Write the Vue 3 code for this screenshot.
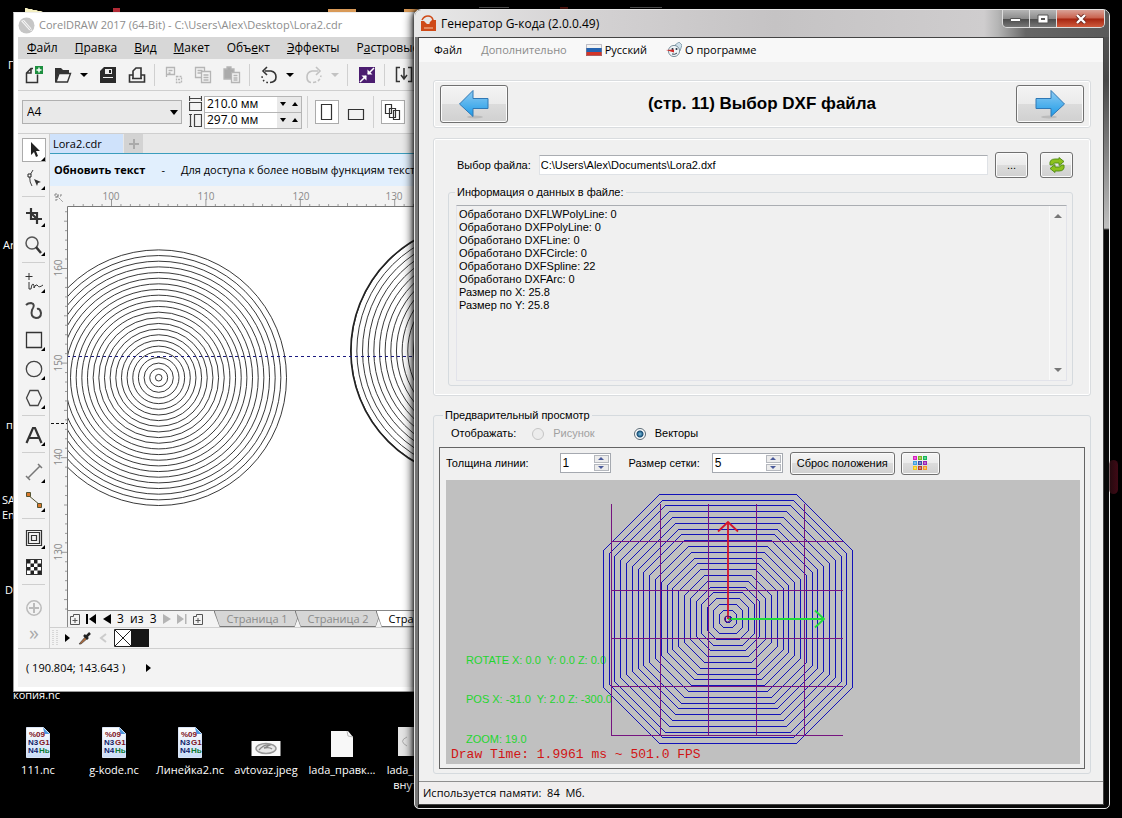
<script setup>
import { ref } from 'vue'

const paper = ref('A4')
const pageW = ref('210.0 мм')
const pageH = ref('297.0 мм')
const filePath = ref('C:\\Users\\Alex\\Documents\\Lora2.dxf')
const view = ref('vectors')
const lineWidth = ref('1')
const gridSize = ref('5')
const log = ref(
  [
    'Обработано DXFLWPolyLine: 0',
    'Обработано DXFPolyLine: 0',
    'Обработано DXFLine: 0',
    'Обработано DXFCircle: 0',
    'Обработано DXFSpline: 22',
    'Обработано DXFArc: 0',
    'Размер по X: 25.8',
    'Размер по Y: 25.8',
  ].join('\n')
)

const menu = [
  ['', 'Ф', 'айл'],
  ['', 'П', 'равка'],
  ['', 'В', 'ид'],
  ['', 'М', 'акет'],
  ['Объ', 'е', 'кт'],
  ['', 'Э', 'ффекты'],
  ['Р', 'а', 'стровые'],
]

const rings = Array.from({ length: 23 }, (_, i) => 3.3 + i * 5.66)
const hTicks = Array.from({ length: 50 }, (_, i) => ({ x: 111.5 + (i - 4) * 9.44, major: (i - 4) % 10 === 0, mid: (i - 4) % 5 === 0 }))
const vTicks = Array.from({ length: 43 }, (_, i) => ({ y: 268.5 + (i - 6) * 9.46, major: (i - 6) % 10 === 0, mid: (i - 6) % 5 === 0 }))

const octagons = Array.from({ length: 22 }, (_, i) => {
  const r = 3 + i * 5.79
  const k = r * 0.55
  return [[-k, -r], [k, -r], [r, -k], [r, k], [k, r], [-k, r], [-r, k], [-r, -k]]
    .map(([x, y]) => `${Math.round(727.5 + x) + 0.5},${Math.round(619.5 + y) + 0.5}`)
    .join(' ')
})

const swatches = ['#d81fc0', '#7bb51f', '#14b85a', '#3c9fe0', '#3b4aa8', '#9a1fb5', '#f0c814', '#b8402a', '#f59a23']
const cells = Array.from({ length: 16 }, (_, i) => i).filter((i) => (Math.floor(i / 4) + i) % 2 === 0)

const ncFiles = [
  { name: '111.nc', cls: 'f1' },
  { name: 'g-kode.nc', cls: 'f2' },
  { name: 'Линейка2.nc', cls: 'f3' },
]
</script>

<template>
  <main class="desktop">
    <span class="peek p1"></span><span class="peek p2"></span><span class="peek p3"></span><span class="peek p4"></span>
    <span class="peek p5"></span><span class="peek p6"></span><span class="peek p7"></span>
    <span class="dlabel l1">Пр</span>
    <span class="dlabel l2">Ar</span>
    <span class="dlabel l3">пк</span>
    <span class="dlabel l4">SA<br />En</span>
    <span class="dlabel l5">Do</span>
    <span class="dlabel l6">копия.nc</span>

    <div v-for="f in ncFiles" :key="f.name" class="file" :class="f.cls">
      <svg width="24" height="31" viewBox="0 0 24 31">
        <defs><linearGradient id="nc" x1="0" y1="0" x2="0" y2="1"><stop offset="0" stop-color="#fff" /><stop offset="1" stop-color="#c9dcf7" /></linearGradient></defs>
        <path d="M.5.5h17l6 6v24H.5z" fill="url(#nc)" stroke="#dbe6f8" />
        <path d="M17 .5l6.500 6.500h-5z" fill="#4c97dd" />
        <g font-family="Liberation Sans" font-size="8" font-weight="bold">
          <text x="3" y="10" fill="#7c1020">%09</text>
          <text x="2" y="18" fill="#101c6a">N3</text><text x="13" y="18" fill="#7c1020">G1</text>
          <text x="2" y="26" fill="#101c6a">N4</text><text x="13" y="26" fill="#0c7a34">Hь</text>
        </g>
      </svg>
      <span>{{ f.name }}</span>
    </div>
    <div class="file f4">
      <svg width="30" height="31">
        <rect y="14" x=".5" width="29" height="15" fill="#fafafa" />
        <ellipse cx="15" cy="21.500" rx="10" ry="5" fill="#e8e8e8" stroke="#999" stroke-width="1.500" />
        <path d="M8 23q5-6 11-5l-6 3q6-1 8 1" fill="none" stroke="#888" stroke-width="1.300" />
      </svg>
      <span>avtovaz.jpeg</span>
    </div>
    <div class="file f5">
      <svg width="24" height="31"><path d="M1 4h17l5 6v20H1z" fill="#f8f8f8" /><path d="M17 4l1 5 5 1" fill="none" stroke="#bbb" /></svg>
      <span>lada_правк...</span>
    </div>
    <div class="file f6">
      <svg width="30" height="31"><path d="M1 0h26v29H1z" fill="#e4e4e4" /><path d="M10 10q-9 4 0 9" fill="none" stroke="#aaa" /></svg>
      <span>lada_герб<br />внутри</span>
    </div>

    <!-- Drawing editor -->
    <section class="corel">
      <header class="c-title">
        <svg width="17" height="17"><circle cx="8.500" cy="8.500" r="8" fill="#c6c6c6" /><path d="M3 4l3-1 7 8 1 3-3-1z" fill="#f6f6f6" /><path d="M5 4l8 9" stroke="#c6c6c6" /></svg>
        <span>CorelDRAW 2017 (64-Bit) - C:\Users\Alex\Desktop\Lora2.cdr</span>
      </header>
      <nav class="c-menu">
        <button v-for="m in menu" :key="m[2]">{{ m[0] }}<u>{{ m[1] }}</u>{{ m[2] }}</button>
      </nav>

      <div class="c-bar">
        <button aria-label="Создать"><svg width="24" height="24"><path d="M11 5.500H9L4.500 10v9.500h11v-8M9 6v4H5" fill="none" stroke="#333" stroke-width="1.500" /><rect x="13" y="3" width="8" height="8" fill="#1d8f3f" /><path d="M17 4.500v5M14.500 7h5" stroke="#fff" stroke-width="1.400" /></svg></button>
        <button aria-label="Открыть"><svg width="24" height="24"><path d="M4 5h6l2 2h6v3H8l-3 9H4z" fill="#333" /><path d="M8 10.500h11.500l-3 8.500H5z" fill="#f3f3f3" stroke="#333" stroke-width="1.400" /></svg></button>
        <button class="caret" aria-label="Недавние"><svg width="8" height="24"><path d="M0 10h8l-4 4z" /></svg></button>
        <button aria-label="Сохранить"><svg width="24" height="24"><path d="M4 8l4-4h12v16H4z" fill="#2b2b2b" /><path d="M9 6h7v5H9zM7 14h10v1H7z" fill="#eee" /><path d="M13 7h2v3h-2z" fill="#222" /></svg></button>
        <button aria-label="Печать"><svg width="24" height="24" fill="none" stroke="#333" stroke-width="1.600"><path d="M8 15V8l3-3h5v10" /><path d="M8 12H4.500v7h15v-7H16M7 15.500h10" /></svg></button>
        <i class="sep"></i>
        <button aria-label="Вырезать"><svg width="24" height="24" fill="none" stroke="#b5b5b5" stroke-width="1.300"><path d="M4.500 14V4.500h8v7h-8M6.500 7.500h4M6.500 10h2" /><path d="M14.500 13.500h5v6h-5z" stroke-dasharray="2 1" /><path d="M16 16.500h2" /></svg></button>
        <button aria-label="Копировать"><svg width="24" height="24" fill="#f3f3f3" stroke="#b5b5b5" stroke-width="1.300"><path d="M4.500 4.500h9v10h-9zM6.500 7.500h5M6.500 10h5" /><path d="M10.500 8.500h9v11h-9zM12.500 12h5M12.500 14.500h5M12.500 17h5" /></svg></button>
        <button aria-label="Вставить"><svg width="24" height="24" stroke="#b5b5b5" stroke-width="1.300"><path d="M4 6h3V4h4v2h3v10H4z" fill="#aaa" /><path d="M11.500 9.500h8v10h-8zM13.500 12.500h4M13.500 15h4M13.500 17h4" fill="#f3f3f3" /></svg></button>
        <i class="sep"></i>
        <button aria-label="Отменить"><svg width="24" height="24" fill="none" stroke="#333" stroke-width="1.600"><path d="M8 8h6q5 1 5 6t-6 5.500" /><path d="M10 4L6 8l4 4" /><path d="M11 19.500Q5 19 5 12" stroke-dasharray="1.500 2.500" /></svg></button>
        <button class="caret" aria-label="История отмены"><svg width="8" height="24"><path d="M0 10h8l-4 4z" /></svg></button>
        <button aria-label="Повторить"><svg width="24" height="24" fill="none" stroke="#c2c2c2" stroke-width="1.600"><path d="M16 8h-6q-5 1-5 6t4 5.500" /><path d="M14 4l4 4-4 4" /><path d="M11 19.500q7-.5 8-7" stroke-dasharray="3 2" /></svg></button>
        <button class="caret" aria-label="История повтора"><svg width="8" height="24"><path d="M0 10h8l-4 4z" fill="#c2c2c2" /></svg></button>
        <i class="sep"></i>
        <button aria-label="Поиск содержимого"><svg width="24" height="24"><path d="M4 4h16v16H4z" fill="#4b1d70" /><path d="M19 5l-6 6M5 19l6-6" stroke="#fff" stroke-width="1.500" /><path d="M12.500 6.500v5h5zM11.500 17.500v-5h-5z" fill="#fff" /></svg></button>
        <i class="sep"></i>
        <button aria-label="Импорт"><svg width="24" height="24" fill="none" stroke="#333" stroke-width="1.500"><path d="M8 4.500H4.500v14H8M16 4.500h3.500v14H16M12 5v11M9 12l3 4 3-4" /></svg></button>
      </div>

      <div class="c-bar prop">
        <label class="paper">
          <select v-model="paper" aria-label="Формат"><option>A4</option></select>
          <svg width="8" height="5"><path d="M0 0h8L4 5z" /></svg>
        </label>
        <svg class="dims" width="13" height="32" fill="none" stroke="#444" stroke-width="1.200"><path d="M0 2.500h13M.5 0v5M12.500 0v5M.5 6.500h12v8H.5z" /><path d="M1.500 18v13M0 18.500h3M0 30.500h3M5.500 18.500h7v12h-7z" /></svg>
        <div class="sizes">
          <div><input v-model="pageW" aria-label="Ширина" /><button aria-label="Меньше"><svg width="6" height="4"><path d="M0 0h6L3 4z" /></svg></button><button aria-label="Больше"><svg width="6" height="4"><path d="M0 4h6L3 0z" /></svg></button></div>
          <div><input v-model="pageH" aria-label="Высота" /><button aria-label="Меньше"><svg width="6" height="4"><path d="M0 0h6L3 4z" /></svg></button><button aria-label="Больше"><svg width="6" height="4"><path d="M0 4h6L3 0z" /></svg></button></div>
        </div>
        <i class="sep"></i>
        <button class="framed" aria-label="Книжная"><svg width="24" height="24"><path d="M6.500 4.500h10v15h-10z" fill="none" stroke="#333" stroke-width="1.200" /></svg></button>
        <button aria-label="Альбомная"><svg width="24" height="24"><path d="M4.500 9.500h15v10h-15z" fill="none" stroke="#333" stroke-width="1.200" /></svg></button>
        <i class="sep"></i>
        <button class="framed" aria-label="Все страницы"><svg width="24" height="24" fill="#fff" stroke="#333" stroke-width="1.200"><path d="M4.500 4.500h6v9h-6zM8.500 8.500h6v9h-6zM12.500 10.500h6v9h-6z" /></svg></button>
      </div>

      <div class="c-main">
        <aside class="tools">
          <button class="framed fly" aria-label="Указатель"><svg width="24" height="24"><path d="M9 4v13l3-3 2 5 2-1-2-5h4z" fill="#222" /></svg></button>
          <button class="fly" aria-label="Форма"><svg width="24" height="24"><path d="M11 3Q5 11 10 19" fill="none" stroke="#444" /><path d="M6 7h3v3H6z" fill="#fff" stroke="#222" /><path d="M12 12l7 3-3 1-1 3z" fill="#333" /></svg></button>
          <i class="hsep"></i>
          <button class="fly" aria-label="Обрезка"><svg width="24" height="24" fill="none" stroke="#333" stroke-width="2.200"><path d="M9 4v11h11M4 9h11v11M9 4v2M9 9l6 6" /></svg></button>
          <button class="fly" aria-label="Масштаб"><svg width="24" height="24" fill="none" stroke="#555" stroke-width="1.500"><circle cx="10" cy="10" r="6" /><path d="M14 14l5 6" stroke="#333" stroke-width="2.500" /></svg></button>
          <i class="hsep"></i>
          <button class="fly" aria-label="Свободная форма"><svg width="24" height="24" fill="none" stroke="#333"><path d="M7 3v7M3.500 6.500h7M7 12v7h2q1-7 3-4v3q2-5 4-2 1 2 5-1" /></svg></button>
          <button aria-label="Художественное оформление"><svg width="24" height="24"><path d="M4 6q2-2 5-2 5 1 1 7-2 7 4 8 5 0 5-5-1-5-4-4" fill="none" stroke="#444" stroke-width="2" /></svg></button>
          <button class="fly" aria-label="Прямоугольник"><svg width="24" height="24"><path d="M4.500 4.500h15v15h-15z" fill="none" stroke="#333" stroke-width="1.300" /></svg></button>
          <button class="fly" aria-label="Эллипс"><svg width="24" height="24"><circle cx="12" cy="12" r="7.700" fill="none" stroke="#444" stroke-width="1.300" /></svg></button>
          <button class="fly" aria-label="Многоугольник"><svg width="24" height="24"><path d="M8 4.500h8l3.500 7.500-3.500 7.500H8L4.500 12z" fill="none" stroke="#444" stroke-width="1.300" /></svg></button>
          <i class="hsep"></i>
          <button class="fly" aria-label="Текст"><svg width="24" height="24"><path d="M4.500 20L11 5h2l6.500 15M7 15h10" fill="none" stroke="#333" stroke-width="2.200" /></svg></button>
          <i class="hsep"></i>
          <button class="fly" aria-label="Размерная линия"><svg width="24" height="24" stroke="#777" stroke-width="1.500"><path d="M6 18L18 6M4 16l4 4M16 4l4 4" /></svg></button>
          <button class="fly" aria-label="Соединитель"><svg width="24" height="24" stroke="#553"><path d="M6 6l12 10" /><path d="M4.500 3.500h4v4h-4zM15.500 14.500h4v4h-4z" fill="#d9772b" /></svg></button>
          <i class="hsep"></i>
          <button class="fly" aria-label="Контур"><svg width="24" height="24" fill="none" stroke="#333" stroke-width="1.200"><path d="M4.500 4.500h15v15h-15zM6.500 6.500h11v11h-11zM9.500 9.500h5v5h-5z" /></svg></button>
          <button aria-label="Прозрачность"><svg width="24" height="24"><path d="M4 4h16v16H4z" fill="#333" /><path d="M5 5h14v14H5z" fill="#fff" /><rect v-for="c in cells" :key="c" :x="5 + (c % 4) * 3.5" :y="5 + Math.floor(c / 4) * 3.5" width="3.500" height="3.500" fill="#222" /></svg></button>
          <i class="hsep"></i>
          <button aria-label="Добавить"><svg width="24" height="24" fill="none" stroke="#bbb" stroke-width="1.500"><circle cx="12" cy="16" r="7.200" /><path d="M12 11v10M7 16h10" stroke-width="2" /></svg></button>
          <button class="more" aria-label="Ещё">»</button>
        </aside>

        <div class="work">
          <div class="doc-tabs"><button class="doc">Lora2.cdr</button><button class="add" aria-label="Новый документ"><svg width="12" height="12"><path d="M6 1v10M1 6h10" stroke="#aaa" stroke-width="2" /></svg></button></div>
          <p class="notice"><b>Обновить текст</b><span>-</span><span>Для доступа к более новым функциям текста</span></p>
          <svg class="sheet">
            <g transform="translate(-50 -186)">
              <path d="M67 206h700v500H67z" fill="#fff" />
              <path d="M54 195h8M56 193v9M57 196l6 6M57 196v4M57 196h4" stroke="#888" fill="none" stroke-dasharray="2 1" />
              <g stroke="#999">
                <path v-for="t in hTicks" :key="t.x" :d="`M${t.x} ${t.major ? 199 : t.mid ? 203 : 204}V206`" />
                <path v-for="t in vTicks" :key="t.y" :d="`M${t.major ? 61 : t.mid ? 64 : 65} ${t.y}H67`" />
              </g>
              <g class="rule">
                <text x="111" y="200">100</text><text x="206" y="200">110</text><text x="301" y="200">120</text><text x="394" y="200">130</text>
                <text transform="translate(62 268) rotate(-90)">160</text>
                <text transform="translate(62 363) rotate(-90)">150</text>
                <text transform="translate(62 457) rotate(-90)">140</text>
                <text transform="translate(62 552) rotate(-90)">130</text>
              </g>
              <path d="M51 423.500H67" stroke="#111" stroke-dasharray="3 2" />
              <svg x="67" y="206" width="700" height="420">
                <g fill="none" stroke="#222" stroke-width=".9">
                  <circle v-for="r in rings" :key="r" cx="91.700" cy="171.700" :r="r" />
                  <circle v-for="r in rings" :key="r" cx="412" cy="145" :r="r" />
                  <circle cx="412" cy="145" r="128.200" stroke-width="1.600" />
                </g>
                <path d="M0 150.500H700" stroke="#1a1a80" stroke-dasharray="3 3" />
              </svg>
              <path d="M67.500 700V206.500H800" fill="none" stroke="#777" />
            </g>
          </svg>
          <div class="pages">
            <svg width="10" height="11" fill="none" stroke="#555"><path d="M.5 2.500h3v-2h6v10h-9zM5 4v5M2.500 6.500h5" /></svg>
            <svg width="11" height="10"><path d="M0 0h2v10H0zM10 0v10L3 5z" /></svg>
            <svg width="8" height="10"><path d="M8 0v10L0 5z" /></svg>
            <span>3&nbsp; из&nbsp; 3</span>
            <svg width="8" height="10"><path d="M0 0v10l8-5z" fill="#b5b5b5" /></svg>
            <svg width="10" height="10"><path d="M0 0v10l7-5zM8 0h1.500v10H8z" fill="#b5b5b5" /></svg>
            <svg width="10" height="11" fill="none" stroke="#555"><path d="M.5 2.500h3v-2h6v10h-9zM5 4v5M2.500 6.500h5" /></svg>
            <div class="ptabs"><button><span>Страница 1</span></button><button><span>Страница 2</span></button><button class="on"><span>Страница 3</span></button></div>
          </div>
          <div class="palette">
            <svg width="6" height="16"><path d="M1 0v16M5 0v16" stroke="#bbb" stroke-dasharray="1 1" /></svg>
            <svg width="6" height="8"><path d="M0 0v8l5-4z" /></svg>
            <svg width="14" height="14"><path d="M1 13l7-8 2 2-7 6z" fill="#b06a3a" stroke="#444" stroke-width=".7" /><path d="M6 4l4 4M8 6l4-4" stroke="#222" stroke-width="2.500" /></svg>
            <svg width="8" height="10"><path d="M7 1L2 5l5 4" fill="none" stroke="#ccc" stroke-width="2" /></svg>
            <svg class="sw" width="35" height="18"><path d="M.5.500h17v17H.5z" fill="#fff" stroke="#222" /><path d="M1 1l16 16M17 1L1 17" stroke="#222" /><path d="M17 0h18v18H17z" fill="#161616" /></svg>
          </div>
        </div>
      </div>
      <footer class="c-status"><span>( 190.804; 143.643 )</span><svg width="6" height="8"><path d="M0 0v8l5-4z" /></svg></footer>
    </section>

    <!-- G-code generator -->
    <section class="gen">
      <header class="g-title">
        <svg width="17" height="17"><path d="M1 16V6h3l3 3h2l4-4h3v11z" fill="#cf4a18" /><path d="M2 5q2-4 6-4t5 4l-3 3" fill="none" stroke="#cf4a18" stroke-width="1.500" /><path d="M4 13h9" stroke="#f4c7a8" stroke-width="1" /></svg>
        <h1>Генератор G-кода (2.0.0.49)</h1>
        <div class="ctl">
          <button aria-label="Свернуть"><svg width="14" height="8"><path d="M1.500 3.500h10v3h-10z" fill="#fff" stroke="#555" /></svg></button>
          <button aria-label="Развернуть"><svg width="12" height="10"><path d="M1 1h10v8H1z" fill="#fff" stroke="#555" /><path d="M4 4h4v2H4z" fill="#555" /></svg></button>
          <button class="x" aria-label="Закрыть"><svg width="12" height="10"><path d="M2 1l8 8M10 1L2 9" stroke="#6a2a22" stroke-width="4" /><path d="M2 1l8 8M10 1L2 9" stroke="#fff" stroke-width="2.400" /></svg></button>
        </div>
      </header>
      <div class="client">
        <nav class="g-menu">
          <button>Файл</button>
          <button disabled>Дополнительно</button>
          <button class="ic"><svg width="16" height="12"><path d="M0 0h16v4H0z" fill="#f2f2f2" /><path d="M0 4h16v4H0z" fill="#2463b0" /><path d="M0 8h16v4H0z" fill="#d23428" /><path d="M.5.500h15v11H.5z" fill="none" stroke="#889" stroke-opacity=".5" /></svg>Русский</button>
          <button class="ic"><svg width="16" height="16"><path d="M9 3l4-3 3 3-2 6z" fill="#cfe0ea" stroke="#7a95a5" stroke-width=".8" /><circle cx="8" cy="9" r="5.600" fill="#eef4f7" stroke="#7d929e" /><circle cx="6.500" cy="7" r="1" fill="#234" /><circle cx="10.500" cy="7" r="1" fill="#234" /><path d="M0 8l8-.5v3z" fill="#cf2a28" /><path d="M6 12q3 1 5-1" stroke="#345" fill="none" /></svg>О программе</button>
        </nav>

        <div class="step box">
          <button class="btn big" aria-label="Назад"><svg width="32" height="30"><defs><linearGradient id="ar" x1="0" y1="0" x2="0" y2="1"><stop offset="0" stop-color="#8ecbf2" /><stop offset="1" stop-color="#1d9be8" /></linearGradient></defs><ellipse cx="17" cy="28" rx="8" ry="1.500" fill="#bbb" /><path d="M1.500 15L15 1.500V9.500h15v10H15v8z" fill="url(#ar)" stroke="#2f78b5" /></svg></button>
          <h2>(стр. 11) Выбор DXF файла</h2>
          <button class="btn big" aria-label="Далее"><svg width="32" height="30"><ellipse cx="15" cy="28" rx="8" ry="1.500" fill="#bbb" /><path d="M30.500 15L17 1.500V9.500H2v10h15v8z" fill="url(#ar)" stroke="#2f78b5" /></svg></button>
        </div>

        <div class="filebox box">
          <div class="row">
            <label for="path">Выбор файла:</label>
            <input id="path" v-model="filePath" type="text" />
            <button class="btn sm">...</button>
            <button class="btn sm ref" aria-label="Обновить"><svg width="16" height="16"><g fill="#8cc21c" stroke="#4f8a14" stroke-width=".9"><path d="M1 8q-1-6 5-6h4V.500l5 4-5 4V6H6Q4 6 4 8z" /><path d="M15 8q1 6-5 6H6v1.500l-5-4 5-4V10h4q2 0 2-2z" /></g></svg></button>
          </div>
          <fieldset class="info">
            <legend>Информация о данных в файле:</legend>
            <div class="logwrap">
              <textarea v-model="log" readonly aria-label="Информация о данных в файле"></textarea>
              <div class="scroll"><svg width="8" height="4"><path d="M0 4h8L4 0z" fill="#777" /></svg><svg width="8" height="4"><path d="M0 0h8L4 4z" fill="#777" /></svg></div>
            </div>
          </fieldset>
        </div>

        <fieldset class="preview">
          <legend>Предварительный просмотр</legend>
          <div class="modes">
            <span>Отображать:</span>
            <label class="off"><input v-model="view" type="radio" value="picture" disabled />Рисунок</label>
            <label><input v-model="view" type="radio" value="vectors" />Векторы</label>
          </div>
          <div class="panel">
            <div class="opts">
              <label for="lw">Толщина линии:</label>
              <div class="spin s1"><input id="lw" v-model="lineWidth" type="text" /><div><button aria-label="Больше"><svg width="6" height="3"><path d="M0 3h6L3 0z" fill="#4a5a9a" /></svg></button><button aria-label="Меньше"><svg width="6" height="3"><path d="M0 0h6L3 3z" fill="#4a5a9a" /></svg></button></div></div>
              <label for="gs" class="second">Размер сетки:</label>
              <div class="spin s2"><input id="gs" v-model="gridSize" type="text" /><div><button aria-label="Больше"><svg width="6" height="3"><path d="M0 3h6L3 0z" fill="#4a5a9a" /></svg></button><button aria-label="Меньше"><svg width="6" height="3"><path d="M0 0h6L3 3z" fill="#4a5a9a" /></svg></button></div></div>
              <button class="btn reset">Сброс положения</button>
              <button class="btn pal" aria-label="Цвета"><svg width="15" height="15"><g v-for="(c, i) in swatches" :key="c"><rect :x="(i % 3) * 5" :y="Math.floor(i / 3) * 5" width="4" height="4" :fill="c" /><rect :x="(i % 3) * 5 + 1" :y="Math.floor(i / 3) * 5 + 1" width="2" height="2" fill="#fff" opacity=".35" /></g></svg></button>
            </div>
            <svg class="gl">
              <g transform="translate(-446 -481)">
                <g class="hud">
                  <text x="466" y="665">ROTATE X: 0.0&nbsp; Y: 0.0 Z: 0.0</text>
                  <text x="466" y="704">POS X: -31.0&nbsp; Y: 2.0 Z: -300.0</text>
                  <text x="466" y="744">ZOOM: 19.0</text>
                </g>
                <text class="time" x="451" y="759">Draw Time: 1.9961 ms ~ 501.0 FPS</text>
                <g fill="none" stroke="#1212b8" shape-rendering="crispEdges"><polygon v-for="o in octagons" :key="o" :points="o" /></g>
                <path d="M611.500 505V737M660.500 505V737M708.500 505V737M756.500 505V737M804.500 505V737M611 542.500H843M611 591.500H843M611 639.500H843M611 687.500H843M611 736.500H843" stroke="#761480" fill="none" />
                <path d="M728 620H824M815 611.500L824 620L815 628.500" fill="none" stroke="#1fdc3a" stroke-width="1.800" />
                <path d="M728 620V523M718 532.500L728 523L738 532.500" fill="none" stroke="#d3152c" stroke-width="1.800" />
                <circle cx="727.500" cy="620" r="3" fill="none" stroke="#5a1070" />
              </g>
            </svg>
          </div>
        </fieldset>

        <footer class="g-status">Используется памяти:&nbsp; 84&nbsp; Мб.</footer>
      </div>
    </section>
    <span class="glow"></span>
  </main>
</template>

<style>
html, body { height: 100%; background: #000; }
#app { height: 100%; }
</style>

<style scoped>
* { box-sizing: border-box; }
button { margin: 0; padding: 0; border: 0; background: none; font: inherit; color: inherit; }
button:disabled { color: #8a8a8a; }
svg { display: block; flex: none; }
input, select, textarea { font: inherit; color: inherit; margin: 0; border-radius: 0; outline: 0; }

.desktop { position: relative; min-height: 100%; overflow: hidden; background: #000; font: 12px/16px "Open Sans", "Noto Sans", sans-serif; color: #000; }
.peek { position: absolute; top: 8px; height: 4px; }
.p1 { left: 25px; width: 18px; background: linear-gradient(12deg, #f3eec0 50%, #000 55%); }
.p2 { left: 113px; width: 7px; background: #b02a35; }
.p3 { left: 328px; width: 28px; top: 9px; background: #d99a58; }
.p4 { left: 404px; width: 14px; top: 9px; background: #d99a58; }
.p5 { left: 479px; width: 30px; top: 7px; height: 1px; background: #777; }
.p6 { left: 560px; width: 8px; top: 7px; height: 2px; background: #7a2018; }
.p7 { left: 630px; width: 32px; top: 7px; height: 1px; background: #777; }
.dlabel { position: absolute; color: #fff; font-size: 11px; line-height: 15px; }
.l1 { left: 8px; top: 57px; }
.l2 { left: 3px; top: 237px; }
.l3 { left: 6px; top: 417px; }
.l4 { left: 2px; top: 492px; }
.l5 { left: 5px; top: 582px; }
.l6 { left: 13px; top: 687px; }
.file { position: absolute; top: 727px; width: 76px; display: flex; flex-direction: column; align-items: center; gap: 4px; color: #fff; font-size: 11px; line-height: 15px; text-align: center; white-space: nowrap; }
.f1 { left: 0; } .f2 { left: 76px; } .f3 { left: 152px; } .f4 { left: 228px; } .f5 { left: 304px; } .f6 { left: 374px; }

.corel { position: absolute; left: 13px; top: 12px; width: 50%; min-height: 679px; background: #fff; border: 1px solid #9a9a9a; border-top-color: #eee; padding: 0 4px 4px; display: flex; flex-direction: column; overflow: hidden; }
.c-title { display: flex; align-items: center; gap: 4px; height: 24px; color: #8d8d8d; font-size: 11px; }
.c-menu { display: flex; flex: none; gap: 17px; height: 22px; padding-left: 9px; background: #d7d7d7; white-space: nowrap; overflow: hidden; }
.c-menu button { flex: none; }
.c-bar { display: flex; flex: none; align-items: center; gap: 5px; height: 32px; padding-left: 4px; background: #f3f3f3; border-bottom: 1px solid #cfcfcf; }
.caret { width: 11px; }
.sep { width: 3px; height: 22px; border-left: 1px solid #d0d0d0; }
.prop { height: 43px; }
.prop .sep { height: 32px; }
.framed { background: #fff; box-shadow: 0 0 0 1px #ababab inset; }
.paper { position: relative; width: 160px; }
.paper select { width: 100%; height: 24px; padding: 0 4px; appearance: none; border: 1px solid #b0b0b0; background: #e9e9e9; }
.paper svg { position: absolute; right: 4px; top: 10px; }
.dims { margin: 0 -3px 0 2px; }
.sizes { width: 98px; flex: none; border: 1px solid #b5b5b5; background: #b5b5b5; display: grid; grid-template-columns: 100%; gap: 1px; }
.sizes div { display: flex; height: 15px; background: #e9e9e9; }
.sizes input { flex: 1; min-width: 0; border: 0; padding: 0 2px; background: #fff; height: 15px; }
.sizes button { width: 12px; flex: none; display: flex; align-items: center; justify-content: center; }

.c-main { display: flex; flex: 1; background: #f3f3f3; }
.tools { width: 32px; padding: 4px 4px 0; border-right: 1px solid #cfcfcf; display: flex; flex-direction: column; gap: 5px; }
.tools button { position: relative; height: 24px; width: 24px; }
.fly::after { content: ""; position: absolute; right: 1px; bottom: 1px; border: 2px solid transparent; border-right-color: #000; border-bottom-color: #000; }
.hsep { height: 3px; border-top: 1px solid #cfcfcf; }
.tools .more { font-size: 20px; line-height: 24px; color: #aaa; }
.work { flex: 1; min-width: 0; display: flex; flex-direction: column; }
.doc-tabs { display: flex; height: 20px; background: #e8e8e8; border-bottom: 1px solid #3a9dbd; gap: 1px; }
.doc { width: 73px; padding-left: 3px; text-align: left; background: #cfe2fb; font-size: 11px; }
.add { width: 19px; background: #d3d3d3; display: flex; align-items: center; justify-content: center; }
.notice { margin: 0; height: 32px; padding-left: 4px; display: flex; align-items: center; gap: 16px; background: #e1effd; white-space: nowrap; overflow: hidden; font-size: 11px; }
.sheet { width: 100%; height: 424px; }
.rule text { font: 10px "Open Sans", sans-serif; fill: #8a8a8a; text-anchor: middle; }
.pages { display: flex; align-items: center; gap: 6px; height: 17px; margin-left: 17px; padding-left: 2px; border-top: 1px solid #888; border-left: 1px solid #888; font-size: 12px; white-space: nowrap; }
.ptabs { display: flex; align-self: stretch; margin-left: 5px; color: #8a8a8a; font-size: 11px; line-height: 15px; }
.ptabs button { width: 87px; background: #777; clip-path: polygon(0 0, 100% 0, calc(100% - 6px) 100%, 6px 100%); padding: 0 1px 1px; margin-right: -6px; }
.ptabs span { display: block; background: #d6d6d6; clip-path: polygon(0 0, 100% 0, calc(100% - 5px) 100%, 5px 100%); }
.ptabs .on { color: #000; background: #777; }
.ptabs .on span { background: #fff; }
.palette { display: flex; align-items: center; gap: 7px; height: 21px; padding-left: 2px; border-top: 1px solid #cfcfcf; }
.c-status { display: flex; align-items: center; gap: 21px; height: 39px; padding-left: 8px; background: #f3f3f3; border-top: 1px solid #cfcfcf; font-size: 11px; }

.gen { position: absolute; left: 414px; right: 12px; top: 9px; bottom: 9px; display: flex; flex-direction: column; border: 1px solid #e6e6e6; border-radius: 7px 7px 5px 5px; padding: 0 5px 3px 3px; background: linear-gradient(90deg, #777 0 3px, transparent 3px), linear-gradient(#5a5a5a 0, #484848 70px, #c0c0c0 218px, #080808 220px); box-shadow: 0 0 4px #000, -3px 2px 9px rgba(0, 0, 0, .65); }
.g-title { display: flex; align-items: center; gap: 4px; height: 27px; flex: none; margin: 0 -5px 0 -3px; padding-left: 5px; border-radius: 6px 6px 0 0; background: linear-gradient(90deg, #e8e8e8 0, #d4d2d3 170px, #c5c3c4 360px, #cfcdce 82%, #b5b5b5 84%, #666 88%, #5a5a5a); }
.g-title h1 { margin: 0; font-size: 12px; font-weight: 400; line-height: 16px; }
.ctl { align-self: flex-start; margin-left: auto; margin-right: 4px; display: flex; border: 1px solid #ddd; border-top: 0; border-radius: 0 0 5px 5px; overflow: hidden; }
.ctl button { width: 27px; height: 17px; display: flex; align-items: center; justify-content: center; background: linear-gradient(#b5b5b5, #8c8c8c 50%, #4a4a4a 52%, #777); border-right: 1px solid #ddd; }
.ctl .x { width: 47px; border: 0; background: linear-gradient(#d9a196, #c9604c 48%, #a52410 52%, #cf5a3c); }
.client { flex: 1; min-height: 0; display: flex; flex-direction: column; background: #f0f0f0; border: 1px solid #444; font: 11px/13px "Liberation Sans", Arial, sans-serif; }
.g-menu { display: flex; align-items: center; gap: 19px; height: 24px; flex: none; padding-left: 15px; background: #f8f8f8; font: 11px/16px "Open Sans", sans-serif; }
.ic { display: flex; align-items: center; gap: 3px; }
.box { margin: 0 12px 0 14px; border: 1px solid #d9dcdf; border-radius: 3px; box-shadow: 0 0 0 1px #fff inset; }
.step { display: flex; align-items: center; justify-content: space-between; margin-top: 18px; padding: 4px 6px; }
.step h2 { margin: 0; font-size: 17px; line-height: 20px; font-weight: 700; text-align: center; }
.btn { display: flex; align-items: center; justify-content: center; border: 1px solid #707070; border-radius: 3px; background: linear-gradient(#f4f4f4, #ebebeb 50%, #dcdcdc 50%, #d0d0d0); box-shadow: 0 0 0 1px #fbfbfb inset; }
.big { width: 68px; height: 38px; }
.filebox { margin-top: 10px; padding: 13px 17px 9px 14px; }
.row { display: flex; align-items: center; padding-left: 9px; }
.row input { flex: 1; min-width: 0; height: 20px; margin: 0 7px 0 8px; padding: 0 1px; border: 1px solid #dfe2e6; border-top-color: #aaadb2; background: #fff; }
.sm { width: 33px; height: 26px; }
.ref { margin-left: 12px; }
fieldset { margin: 0; min-width: 0; border: 1px solid #d5dade; border-radius: 3px; box-shadow: 0 0 0 1px #fff inset; }
legend { padding: 0 2px; background: #f0f0f0; }
.info { margin-top: 8px; padding: 6px 5px 4px 7px; box-shadow: none; }
.info legend { margin-left: -1px; }
.logwrap { display: flex; height: 176px; border: 1px solid #e2e3ea; border-top-color: #aaadb2; }
.logwrap textarea { flex: 1; min-width: 0; border: 0; padding: 2px; resize: none; background: #f0f0f0; line-height: 13px; overflow: hidden; }
.scroll { width: 17px; padding: 8px 4px; display: flex; flex-direction: column; justify-content: space-between; border-left: 1px solid #fafafa; background: #f1f1f1; }
.preview { flex: 1; margin: 13px 12px 0 14px; padding: 3px 5px 4px; display: flex; flex-direction: column; box-shadow: none; }
.preview legend { margin-left: 4px; }
.modes { display: flex; align-items: flex-start; height: 22px; padding: 2px 0 0 12px; }
.modes label { display: flex; align-items: center; gap: 9px; margin-left: 39px; }
.modes .off { margin-left: 16px; color: #a0a0a0; }
.modes input { appearance: none; width: 12px; height: 12px; border: 1px solid #8e8f8f; border-radius: 50%; background: #f4f4f4; }
.modes input:checked { background: radial-gradient(circle, #7cc4e6 0, #164c74 3px, #fff 4px); border-color: #5a6a75; }
.modes input:disabled { border-color: #c5c5c5; background: #ececec; }
.panel { flex: 1; display: flex; flex-direction: column; border: 1px solid #646464; padding: 3px 4px 4px 6px; }
.opts { display: flex; align-items: center; height: 24px; margin-bottom: 5px; flex: none; }
.spin { display: flex; height: 20px; padding: 1px; border: 1px solid #a5a9b0; background: #fff; }
.spin input { flex: 1; min-width: 0; border: 0; padding: 0 1px; background: none; font-size: 12px; }
.spin > div { width: 15px; display: grid; gap: 1px; }
.spin button { display: flex; align-items: center; justify-content: center; background: #ececec; border: 1px solid #b5b8be; }
.s1 { width: 51px; margin-left: 31px; }
.s2 { width: 71px; margin-left: 12px; }
.second { margin-left: 18px; }
.reset { width: 105px; height: 23px; margin-left: 7px; }
.pal { width: 39px; height: 23px; margin-left: 6px; }
.gl { flex: 1 1 260px; width: 100%; min-height: 260px; background: #c0c0c0; }
.hud text { font: 11px "Liberation Sans", Arial, sans-serif; fill: #1fd62f; }
.time { font: 13px "Liberation Mono", monospace; fill: #d01414; }
.g-status { height: 23px; flex: none; margin-top: 7px; padding: 3px 4px; border-top: 1px solid #8f8f8f; background: #f0eeee; font: 11px/16px "Open Sans", sans-serif; }
.glow { position: absolute; right: 4px; top: 460px; width: 9px; height: 34px; border-radius: 5px; background: linear-gradient(90deg, #3a1018, #6a1024); opacity: .6; }
</style>
